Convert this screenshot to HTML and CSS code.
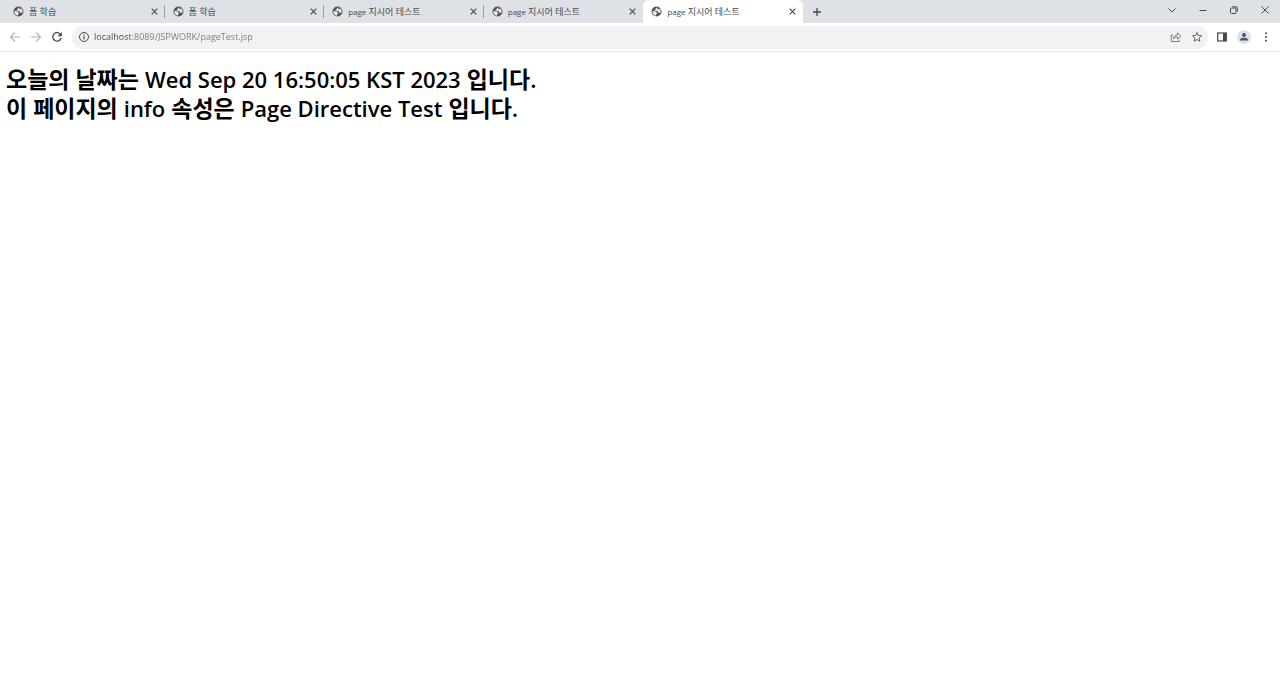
FILE: index.html
```
<!DOCTYPE html>
<html lang="ko">
<head>
<meta charset="utf-8">
<title>page 지시어 테스트</title>
<link rel="stylesheet" href="styles.css">
</head>
<body>
<svg class="sprite" aria-hidden="true">
  <symbol id="globe" viewBox="0 0 24 24"><circle cx="12" cy="12" r="11" fill="#54585d"/><path fill="#e6e9ed" d="M4 11l6 1 3 3v2l-2 1v3C6 21 3 17 3 12zM13 3l-3 3v2l-2 1v2h6l1 3h3l2 2c2-4 1-8-2-11l-1 2h-3V3z"/></symbol>
  <symbol id="close" viewBox="0 0 8 8"><path d="M1.500 1.500l5 5M6.500 1.500l-5 5" fill="none" stroke="currentColor" stroke-width="1"/></symbol>
</svg>
<header class="browser">
  <div class="titlebar">
    <div class="tabs">
      <div class="tab"><svg class="favicon"><use href="#globe"/></svg><span class="label"><span class="hangul">폼 학습</span></span><button class="close" aria-label="탭 닫기"><svg><use href="#close"/></svg></button></div>
      <div class="tab"><svg class="favicon"><use href="#globe"/></svg><span class="label"><span class="hangul">폼 학습</span></span><button class="close" aria-label="탭 닫기"><svg><use href="#close"/></svg></button></div>
      <div class="tab"><svg class="favicon"><use href="#globe"/></svg><span class="label">page <span class="hangul">지시어 테스트</span></span><button class="close" aria-label="탭 닫기"><svg><use href="#close"/></svg></button></div>
      <div class="tab last"><svg class="favicon"><use href="#globe"/></svg><span class="label">page <span class="hangul">지시어 테스트</span></span><button class="close" aria-label="탭 닫기"><svg><use href="#close"/></svg></button></div>
      <div class="tab active"><svg class="favicon"><use href="#globe"/></svg><span class="label">page <span class="hangul">지시어 테스트</span></span><button class="close" aria-label="탭 닫기"><svg><use href="#close"/></svg></button></div>
    </div>
    <button class="new-tab" aria-label="새 탭"><svg viewBox="0 0 10 10"><path d="M5 1v8M1 5h8" stroke="currentColor" stroke-width="1.3"/></svg></button>
    <div class="window-controls">
      <button aria-label="탭 검색"><svg viewBox="0 0 10 10"><path d="M1.5 3.5L5 7l3.500-3.500" fill="none" stroke="currentColor"/></svg></button>
      <button aria-label="최소화"><svg viewBox="0 0 10 10"><path d="M1.500 5.500h7" stroke="currentColor"/></svg></button>
      <button aria-label="이전 크기로"><svg viewBox="0 0 10 10"><rect x="1.500" y="3" width="5.500" height="5.500" rx="1" fill="none" stroke="currentColor"/><path d="M3.300 1.800H7a1.300 1.300 0 0 1 1.300 1.300v3.500" fill="none" stroke="currentColor"/></svg></button>
      <button aria-label="닫기"><svg viewBox="0 0 10 10"><path d="M1.500 1.500l7 7M8.500 1.500l-7 7" stroke="currentColor"/></svg></button>
    </div>
  </div>
  <div class="toolbar">
    <button class="nav off" aria-label="뒤로"><svg viewBox="0 0 12 12"><path d="M11 6H2M6 1.500L1.500 6 6 10.500" fill="none" stroke="currentColor" stroke-width="1.1"/></svg></button>
    <button class="nav off" aria-label="앞으로"><svg viewBox="0 0 12 12"><path d="M1 6h9M6 1.500L10.500 6 6 10.500" fill="none" stroke="currentColor" stroke-width="1.100"/></svg></button>
    <button class="nav" aria-label="새로고침"><svg viewBox="0 0 12 12"><path d="M9.700 3.500A4.300 4.300 0 1 0 10.200 7" fill="none" stroke="currentColor" stroke-width="1.300"/><path d="M10.800 1v4.300H6.500z" fill="currentColor"/></svg></button>
    <div class="omnibox">
      <button class="info" aria-label="사이트 정보"><svg viewBox="0 0 12 12"><circle cx="6" cy="6" r="4.500" fill="none" stroke="currentColor"/><path d="M6 5.200v3.300M6 3.300v1.200" stroke="currentColor" stroke-width="1.200"/></svg></button>
      <input class="url" type="text" aria-label="주소창" value="localhost:8089/JSPWORK/pageTest.jsp">
      <button class="action" aria-label="공유"><svg viewBox="0 0 12 12"><path d="M3 4H1.200v6.500h8V8.500M3.200 8C3.500 5.500 5 4.200 7.500 4V2l3.300 3.100L7.500 8V6C5.500 6 4.200 6.500 3.200 8z" fill="none" stroke="currentColor" stroke-width=".8"/></svg></button>
      <button class="action" aria-label="북마크"><svg viewBox="0 0 12 12"><path d="M6 1.500l1.300 3 3.200.3L8.100 7l.7 3.200L6 8.500l-2.800 1.700L3.900 7 1.500 4.800l3.200-.3z" fill="none" stroke="currentColor"/></svg></button>
    </div>
    <div class="tools">
      <button class="tool" aria-label="측면 패널"><svg viewBox="0 0 12 12"><rect x="1.700" y="2" width="8.600" height="8" fill="none" stroke="currentColor" stroke-width="1.200"/><path d="M7 2h3.500v8H7z" fill="currentColor"/></svg></button>
      <button class="tool avatar" aria-label="프로필"><svg viewBox="0 0 14 14"><circle cx="7" cy="7" r="7" fill="#dde1e7"/><circle cx="7" cy="4.900" r="2" fill="#48566b"/><path d="M3 10.500V9.700C3 8.300 5.500 7.700 7 7.700s4 .6 4 2v.8z" fill="#48566b"/></svg></button>
      <button class="tool" aria-label="메뉴"><svg viewBox="0 0 12 12"><g fill="currentColor"><circle cx="6" cy="2.300" r="1"/><circle cx="6" cy="6" r="1"/><circle cx="6" cy="9.700" r="1"/></g></svg></button>
    </div>
  </div>
</header>
<main class="page">
  <h2 class="message"><span class="hangul">오늘의 날짜는 </span>Wed Sep 20 16:50:05 KST 2023<span class="hangul"> 입니다.</span><br><span class="hangul">이 페이지의 </span>info<span class="hangul"> 속성은 </span>Page Directive Test<span class="hangul"> 입니다.</span></h2>
</main>
</body>
</html>
```
FILE: styles.css
```
* { box-sizing: border-box; }
body {
  margin: 0;
  background: #fff;
  color: #000;
  font-family: "Open Sans", "Noto Sans CJK KR", sans-serif;
}
.sprite { position: absolute; width: 0; height: 0; }
button {
  display: flex;
  align-items: center;
  justify-content: center;
  flex: none;
  margin: 0;
  padding: 0;
  border: 0;
  background: none;
  color: #45494e;
}
svg { display: block; flex: none; }

.titlebar {
  display: flex;
  height: 23px;
  padding-left: 5px;
  background: #dee1e6;
}
.tabs { display: flex; flex: 0 1 798px; }
.tab {
  display: flex;
  align-items: center;
  flex: 1 1 0;
  min-width: 0;
  padding: 0 6px 0 8px;
  font-size: 8px;
  line-height: 12px;
  color: #45494e;
  background: linear-gradient(#9a9da2, #9a9da2) right 5px / 1px 13px no-repeat;
}
.tab.last {
  background: none;
  border-bottom-right-radius: 5px;
}
.tab.active {
  background: #fff;
  border-radius: 6px 6px 0 0;
}
.favicon { width: 11px; height: 11px; margin-right: 5px; }
.label { flex: 1; overflow: hidden; white-space: nowrap; }
.label .hangul { font-size: 9px; }
.close svg { width: 9px; height: 9px; }
.new-tab { width: 28px; }
.new-tab svg { width: 10px; height: 10px; }
.window-controls { display: flex; align-items: center; margin-left: auto; height: 19px; }
.window-controls button { width: 31px; }
.window-controls svg { width: 10px; height: 10px; }

.toolbar {
  display: flex;
  align-items: center;
  height: 29px;
  padding: 0 3px 0 4px;
  border-bottom: 1px solid #e8eaed;
}
.nav { width: 21px; }
.nav svg { width: 12px; height: 12px; }
.nav.off { color: #b0b2b5; }
.omnibox {
  display: flex;
  align-items: center;
  flex: 1;
  height: 23px;
  margin-left: 5px;
  padding: 0 1px 0 6px;
  border-radius: 12px;
  background: #f0f2f4;
}
.info svg { width: 12px; height: 12px; }
.url {
  flex: 1;
  min-width: 0;
  height: 16px;
  margin-left: 4px;
  padding: 0;
  border: 0;
  outline: 0;
  font: 9px/16px "Open Sans", sans-serif;
  color: transparent;
  background: linear-gradient(90deg, #45494e 37px, #76797d 37px);
  background-clip: text;
  -webkit-background-clip: text;
}
.action { width: 21px; color: #5f6368; }
.action svg { width: 12px; height: 12px; }
.tools { display: flex; align-items: center; margin-left: 3px; }
.tool { width: 22px; }
.tool svg { width: 12px; height: 12px; }
.tool.avatar svg { width: 14px; height: 14px; }

.page { padding: 13px 6px; }
.message {
  margin: 0;
  font-size: 22px;
  line-height: 29px;
  font-weight: 600;
}
.message .hangul { font-size: 23px; }
```
